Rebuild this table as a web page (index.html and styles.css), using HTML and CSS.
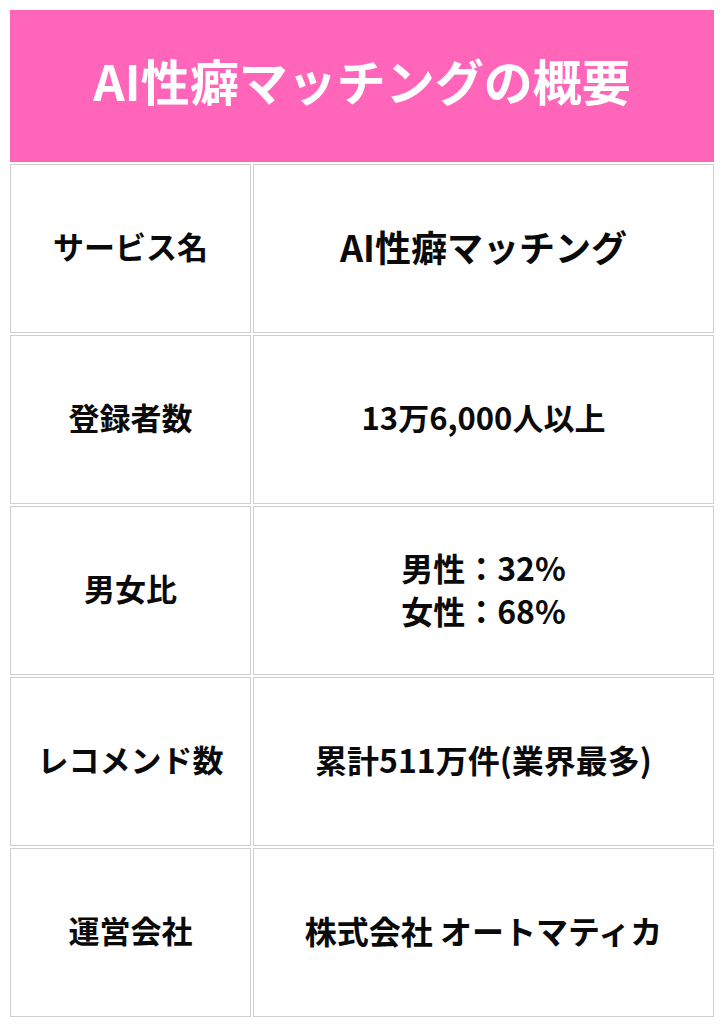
FILE: index.html
```html
<!DOCTYPE html>
<html lang="ja">
<head>
<meta charset="utf-8">
<link rel="stylesheet" href="styles.css">
</head>
<body>
<table class="overview">
  <colgroup>
    <col class="col-label">
    <col class="col-value">
  </colgroup>
  <thead>
    <tr><th class="title" colspan="2">AI性癖マッチングの概要</th></tr>
  </thead>
  <tbody>
    <tr><th class="label">サービス名</th><td class="value value-lg">AI性癖マッチング</td></tr>
    <tr><th class="label">登録者数</th><td class="value value-sm">13万6,000人以上</td></tr>
    <tr><th class="label">男女比</th><td class="value">男性：32%<br>女性：68%</td></tr>
    <tr><th class="label">レコメンド数</th><td class="value">累計511万件(業界最多)</td></tr>
    <tr><th class="label">運営会社</th><td class="value">株式会社 オートマティカ</td></tr>
  </tbody>
</table>
</body>
</html>
```

FILE: styles.css
```css
html, body {
  background: #ffffff;
}
body {
  margin: 8px;
  font-family: "Noto Sans CJK JP", "Noto Sans", sans-serif;
  color: #0a0a0a;
}
.overview {
  width: 100%;
  border-collapse: separate;
  border-spacing: 2px;
  table-layout: fixed;
}
.col-label {
  width: 241px;
}
.title {
  height: 152px;
  padding: 0 0 14px;
  background: #ff65b9;
  color: #ffffff;
  font-size: 49px;
  font-weight: 700;
  text-align: center;
  vertical-align: middle;
  border: none;
  box-sizing: border-box;
}
.label, .value {
  height: 163px;
  padding: 0 0 4px;
  border: 1px solid #cfcfcf;
  text-align: center;
  vertical-align: middle;
  font-weight: 700;
  line-height: 1.32;
}
.label {
  font-size: 31px;
}
.value {
  font-size: 32px;
}
.value-sm {
  font-size: 31px;
}
.value-lg {
  font-size: 36px;
}
```
